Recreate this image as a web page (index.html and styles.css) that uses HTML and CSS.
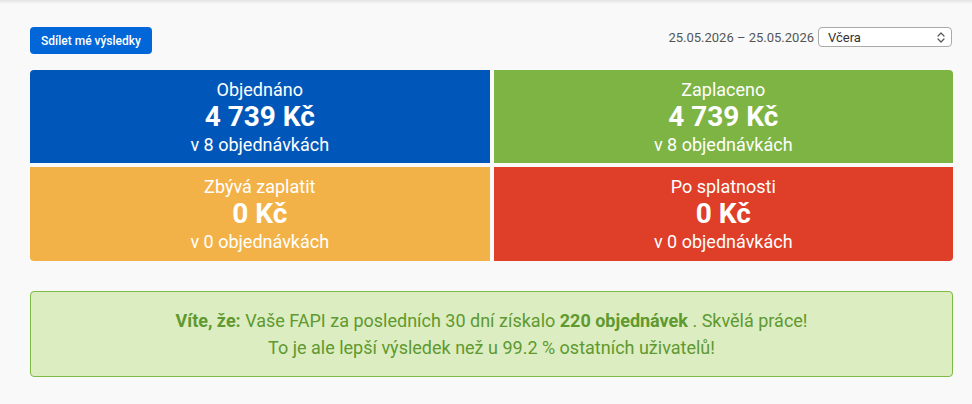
FILE: index.html
```html
<!DOCTYPE html>
<html lang="cs">
<head>
<meta charset="utf-8">
<title>Přehled výsledků</title>
<link rel="stylesheet" href="styles.css">
</head>
<body>
<div class="page">
  <div class="toolbar">
    <button class="share-btn">Sdílet mé výsledky</button>
    <div class="range">
      <span class="range-dates">25.05.2026 – 25.05.2026</span>
      <div class="select">
        <span>Včera</span>
        <svg class="select-arrows" width="8" height="11" viewBox="0 0 8 11"><path d="M1 4 L4 1 L7 4 M1 7 L4 10 L7 7" fill="none" stroke="#555" stroke-width="1.2" stroke-linecap="round" stroke-linejoin="round"/></svg>
      </div>
    </div>
  </div>

  <div class="tiles">
    <div class="tile tile-blue">
      <div class="tile-label">Objednáno</div>
      <div class="tile-amount">4 739 Kč</div>
      <div class="tile-count">v 8 objednávkách</div>
    </div>
    <div class="tile tile-green">
      <div class="tile-label">Zaplaceno</div>
      <div class="tile-amount">4 739 Kč</div>
      <div class="tile-count">v 8 objednávkách</div>
    </div>
    <div class="tile tile-orange">
      <div class="tile-label">Zbývá zaplatit</div>
      <div class="tile-amount">0 Kč</div>
      <div class="tile-count">v 0 objednávkách</div>
    </div>
    <div class="tile tile-red">
      <div class="tile-label">Po splatnosti</div>
      <div class="tile-amount">0 Kč</div>
      <div class="tile-count">v 0 objednávkách</div>
    </div>
  </div>

  <div class="notice">
    <p><strong>Víte, že:</strong> Vaše FAPI za posledních 30 dní získalo <strong>220 objednávek</strong> . Skvělá práce!</p>
    <p>To je ale lepší výsledek než u 99.2 % ostatních uživatelů!</p>
  </div>
</div>
</body>
</html>
```
FILE: styles.css
```css
html, body {
  margin: 0;
  padding: 0;
  background: #f9f9f9;
  font-family: Roboto, "Noto Sans", Arial, sans-serif;
}

body {
  min-height: 404px;
  background: linear-gradient(#e3e3e3, #f9f9f9 4px) no-repeat, #f9f9f9;
}

.page {
  padding: 27px 19px 0 30px;
}

.toolbar {
  display: flex;
  justify-content: space-between;
  align-items: flex-start;
  height: 43px;
}

.share-btn {
  background: #0167d8;
  color: #fff;
  border: 0;
  border-radius: 4px;
  height: 27px;
  width: 122px;
  padding: 0;
  font-family: inherit;
  font-size: 12px;
  font-weight: 500;
}

.range {
  display: flex;
  align-items: center;
  gap: 4px;
  font-size: 13px;
  color: #555;
  margin-right: 1px;
}

.select {
  box-sizing: border-box;
  width: 134px;
  height: 20px;
  border: 1px solid #aaa;
  border-radius: 4px;
  background: #fff;
  display: flex;
  align-items: center;
  justify-content: space-between;
  padding: 0 6px 0 9px;
  color: #333;
}

.tiles {
  display: grid;
  grid-template-columns: 1fr 1fr;
  gap: 4px;
  border-radius: 4px;
  overflow: hidden;
}

.tile {
  height: 94px;
  display: flex;
  flex-direction: column;
  align-items: center;
  justify-content: center;
  color: #fff;
  text-align: center;
}

.tile-label,
.tile-count {
  font-size: 18px;
  line-height: 25px;
}

.tile-amount {
  font-size: 28px;
  font-weight: 700;
  line-height: 30px;
}

.tile-blue { background: #0157b9; }
.tile-green { background: #7db443; }
.tile-orange { background: #f3b248; }
.tile-red { background: #df3e28; }

.tiles .tile:nth-child(1),
.tiles .tile:nth-child(2) {
  height: 93px;
}

.notice {
  margin-top: 30px;
  border: 1px solid #7dbb42;
  border-radius: 4px;
  background: #dcedc1;
  color: #5f9930;
  text-align: center;
  font-size: 18px;
  height: 86px;
  box-sizing: border-box;
  display: flex;
  flex-direction: column;
  justify-content: center;
}

.notice p {
  margin: 0;
  line-height: 27px;
}

.notice strong {
  font-weight: 700;
}
```
